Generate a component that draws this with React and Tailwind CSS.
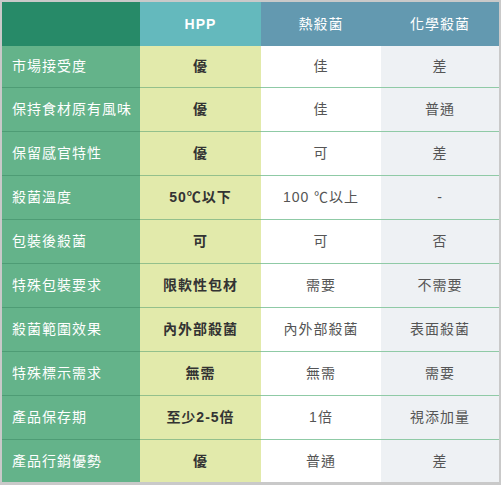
import React from "react";

const rows = [
  ["市場接受度", "優", "佳", "差"],
  ["保持食材原有風味", "優", "佳", "普通"],
  ["保留感官特性", "優", "可", "差"],
  ["殺菌溫度", "50℃以下", "100 ℃以上", "-"],
  ["包裝後殺菌", "可", "可", "否"],
  ["特殊包裝要求", "限軟性包材", "需要", "不需要"],
  ["殺菌範圍效果", "內外部殺菌", "內外部殺菌", "表面殺菌"],
  ["特殊標示需求", "無需", "無需", "需要"],
  ["產品保存期", "至少2-5倍", "1倍", "視添加量"],
  ["產品行銷優勢", "優", "普通", "差"],
];

export default function App() {
  return (
    <div
      className="w-[501px] h-[485px] bg-[#c9c9c9] pt-[2px] pl-[2px] pr-[2px] pb-[3px]"
      style={{ fontFamily: '"Liberation Sans", "Noto Sans CJK TC", sans-serif' }}
    >
      <div className="grid grid-cols-[138px_121px_120px_118px] text-[14px] tracking-[1px]">
        <div className="h-[44px] bg-[#278a68]" />
        <div className="h-[44px] bg-[#64b9bd] text-white font-bold flex items-center justify-center">HPP</div>
        <div className="h-[44px] bg-[#6399b0] text-white flex items-center justify-center">熱殺菌</div>
        <div className="h-[44px] bg-[#6399b0] text-white flex items-center justify-center">化學殺菌</div>
        {rows.map((r, i) => {
          const h = i === 0 ? "h-[42px]" : i === rows.length - 1 ? "h-[42px]" : "h-[44px]";
          const last = i === rows.length - 1;
          return (
            <React.Fragment key={i}>
              <div className={`${h} bg-[#64b38a] text-white pl-[10px] flex items-center ${last ? "" : "border-b border-[#4e9c75]"}`}>
                {r[0]}
              </div>
              <div className={`${h} bg-[#e2eaab] text-[#333] font-bold flex items-center justify-center ${last ? "" : "border-b border-[#94c08c]"}`}>
                {r[1]}
              </div>
              <div className={`${h} bg-white text-[#555] flex items-center justify-center ${last ? "" : "border-b border-[#8fcaa6]"}`}>
                {r[2]}
              </div>
              <div className={`${h} bg-[#eef1f4] text-[#555] flex items-center justify-center ${last ? "" : "border-b border-[#8fcaa6]"}`}>
                {r[3]}
              </div>
            </React.Fragment>
          );
        })}
      </div>
    </div>
  );
}
